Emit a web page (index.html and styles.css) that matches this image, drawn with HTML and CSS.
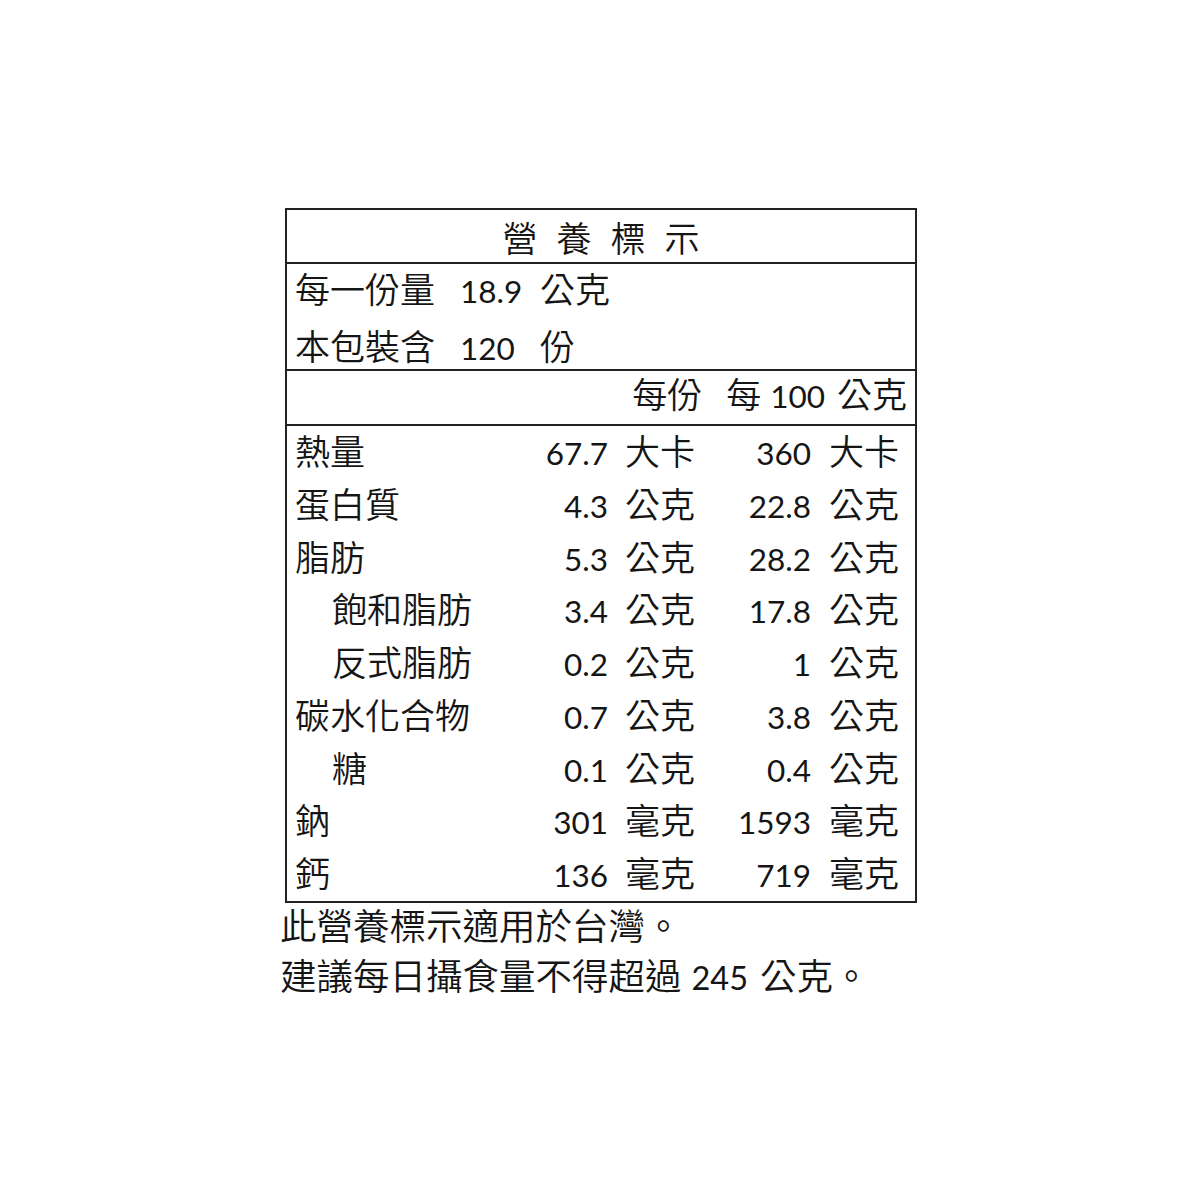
FILE: index.html
```html
<!DOCTYPE html>
<html lang="zh-Hant">
<head>
<meta charset="utf-8">
<title>營養標示</title>
<link rel="stylesheet" href="styles.css">
</head>
<body>
<div class="page">
  <div class="label">
    <div class="title">營養標示</div>
    <div class="serving">
      <div class="srow"><span class="cj">每一份量</span><span class="num">18.9</span><span class="cj">公克</span></div>
      <div class="srow"><span class="cj">本包裝含</span><span class="num">120</span><span class="cj">份</span></div>
    </div>
    <div class="head">
      <span class="cj h1">每份</span>
      <span class="cj h2">每</span><span class="num h3">100</span><span class="cj">公克</span>
    </div>
    <div class="rows">
      <div class="row"><span class="cj">熱量</span><span class="num r">67.7</span><span class="cj u1">大卡</span><span class="num r">360</span><span class="cj u2">大卡</span></div>
      <div class="row"><span class="cj">蛋白質</span><span class="num r">4.3</span><span class="cj u1">公克</span><span class="num r">22.8</span><span class="cj u2">公克</span></div>
      <div class="row"><span class="cj">脂肪</span><span class="num r">5.3</span><span class="cj u1">公克</span><span class="num r">28.2</span><span class="cj u2">公克</span></div>
      <div class="row"><span class="cj sub">飽和脂肪</span><span class="num r">3.4</span><span class="cj u1">公克</span><span class="num r">17.8</span><span class="cj u2">公克</span></div>
      <div class="row"><span class="cj sub">反式脂肪</span><span class="num r">0.2</span><span class="cj u1">公克</span><span class="num r">1</span><span class="cj u2">公克</span></div>
      <div class="row"><span class="cj">碳水化合物</span><span class="num r">0.7</span><span class="cj u1">公克</span><span class="num r">3.8</span><span class="cj u2">公克</span></div>
      <div class="row"><span class="cj sub">糖</span><span class="num r">0.1</span><span class="cj u1">公克</span><span class="num r">0.4</span><span class="cj u2">公克</span></div>
      <div class="row"><span class="cj">鈉</span><span class="num r">301</span><span class="cj u1">毫克</span><span class="num r">1593</span><span class="cj u2">毫克</span></div>
      <div class="row"><span class="cj">鈣</span><span class="num r">136</span><span class="cj u1">毫克</span><span class="num r">719</span><span class="cj u2">毫克</span></div>
    </div>
  </div>
  <div class="notes">
    <div class="note">此營養標示適用於台灣。</div>
    <div class="note">建議每日攝食量不得超過<span class="num n2">245</span>公克。</div>
  </div>
</div>
</body>
</html>
```

FILE: styles.css
```css
html, body {
  margin: 0;
  padding: 0;
  background: #ffffff;
}

body {
  color: #151515;
  font-family: "Noto Sans CJK TC", "Noto Sans CJK SC", sans-serif;
  font-weight: 350;
}

.page {
  padding: 208px 0 0 280px;
}

.label {
  width: 632px;
  margin-left: 5px;
  box-sizing: border-box;
  border: 2px solid #222222;
}

.cj {
  font-family: "Noto Sans CJK TC", "Noto Sans CJK SC", sans-serif;
  font-size: 35px;
  line-height: 1;
  font-weight: 350;
}

.num {
  font-family: Lato, "Open Sans", sans-serif;
  font-size: 31.5px;
  line-height: 1;
  font-weight: 400;
}

.title {
  height: 54px;
  display: flex;
  align-items: center;
  justify-content: center;
  font-size: 35px;
  line-height: 1;
  letter-spacing: 19px;
  padding-left: 19px;
  box-sizing: border-box;
  border-bottom: 2px solid #222222;
}

.serving {
  height: 107px;
  box-sizing: border-box;
  padding-top: 6px;
  border-bottom: 2px solid #222222;
}

.srow {
  height: 56.7px;
  display: grid;
  grid-template-columns: 165px 80px auto;
  align-items: baseline;
  padding-left: 8px;
}

.head {
  height: 55px;
  box-sizing: border-box;
  padding: 4px 8px 0 0;
  display: flex;
  justify-content: flex-end;
  align-items: baseline;
  border-bottom: 2px solid #222222;
}

.h1 { margin-right: 24px; }
.h2 { margin-right: 9px; }
.h3 { margin-right: 12px; }

.row {
  height: 52.75px;
  box-sizing: border-box;
  padding: 6px 0 0 8px;
  display: grid;
  grid-template-columns: 225px 88px 112px 91px 1fr;
  align-items: baseline;
}

.r { text-align: right; }
.u1 { padding-left: 17px; }
.u2 { padding-left: 18px; }
.sub { padding-left: 37px; }

.notes {
  margin-top: -3px;
}

.note {
  font-size: 36.5px;
  line-height: 50px;
  height: 50px;
  white-space: nowrap;
}

.n2 {
  font-size: 32.5px;
  margin: 0 12px 0 10px;
}
```
